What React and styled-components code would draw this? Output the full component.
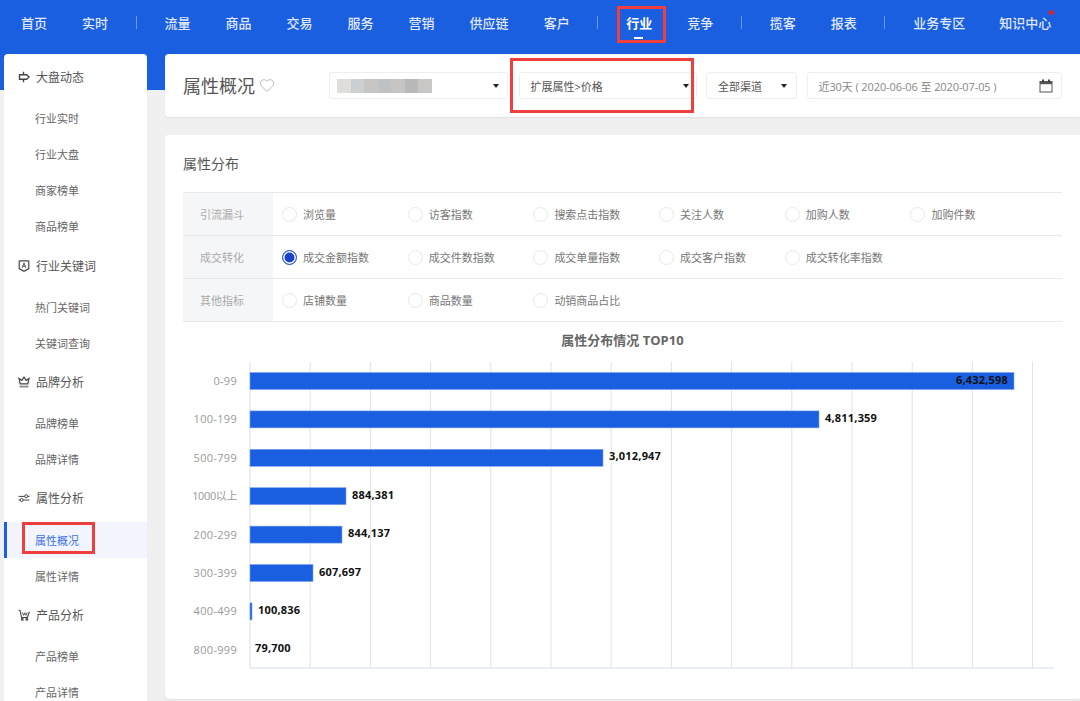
import React from 'react'
import styled, { createGlobalStyle } from 'styled-components'
import { Heart } from 'lucide-react'

const GlobalStyle = createGlobalStyle`
  html, body {
    margin: 0;
    padding: 0;
  }
  body {
    font-family: "Open Sans", "Noto Sans CJK SC", sans-serif;
    color: #555;
  }
  *, *::before, *::after {
    box-sizing: border-box;
  }
`

const RED = '#ee3e3e'
const BLUE = '#195fe0'

const Page = styled.div`
  width: 1080px;
  height: 701px;
  overflow: hidden;
  display: flex;
  flex-direction: column;
  background: linear-gradient(${BLUE} 90px, #f0f0f0 90px);
`

const TopBar = styled.nav`
  height: 54px;
  flex: none;
  display: flex;
  align-items: center;
  padding: 0 0 8.5px 3.5px;
`

const NavItem = styled.a`
  position: relative;
  padding: 0 17.5px;
  font-size: 13px;
  line-height: 20px;
  white-space: nowrap;
  color: ${p => (p.$active ? '#fff' : '#e0e8fa')};
  font-weight: ${p => (p.$active ? 700 : 500)};

  ${p => p.$active && `
    &::before {
      content: '';
      position: absolute;
      left: 8.5px;
      right: 3.5px;
      top: -7px;
      height: 37px;
      border: 3px solid ${RED};
    }
    &::after {
      content: '';
      position: absolute;
      left: 25px;
      bottom: -6.5px;
      width: 9px;
      height: 2px;
      background: #fff;
    }
  `}

  ${p => p.$dot && `
    margin-left: -1px;
    &::after {
      content: '';
      position: absolute;
      right: 14.5px;
      top: -3px;
      width: 5px;
      height: 5px;
      border-radius: 50%;
      background: #d8232a;
    }
  `}
`

const NavDivider = styled.span`
  width: 1px;
  height: 13px;
  margin: 0 10.5px 0 10px;
  background: #6b97ec;
`

const Body = styled.div`
  flex: 1;
  min-height: 0;
  display: flex;
  gap: 18px;
  padding-left: 4px;
`

const Sidebar = styled.aside`
  width: 143px;
  flex: none;
  padding-top: 2px;
  background: #fff;
  border-radius: 4px 4px 0 0;
`

const GroupHead = styled.div`
  height: 44.4px;
  display: flex;
  align-items: center;
  gap: 6px;
  padding: 0 0 2px 14px;
  font-size: 12px;
  color: #555;

  svg {
    width: 12px;
    height: 12px;
    flex: none;
    color: #444;
  }
`

const SideItem = styled.a`
  position: relative;
  height: 36px;
  display: flex;
  align-items: center;
  padding-left: 31px;
  font-size: 11px;
  color: ${p => (p.$active ? '#3f6fe6' : '#666')};
  background: ${p => (p.$active ? '#f2f5fd' : 'transparent')};

  ${p => p.$active && `
    &::before {
      content: '';
      position: absolute;
      left: 0;
      top: 0;
      bottom: 0;
      width: 3px;
      background: ${BLUE};
    }
    &::after {
      content: '';
      position: absolute;
      left: 18px;
      top: 0;
      width: 73px;
      height: 32px;
      border: 3px solid ${RED};
    }
  `}
`

const Main = styled.main`
  flex: 1;
  min-width: 0;
  display: flex;
  flex-direction: column;
  gap: 18px;
  padding-bottom: 2px;
`

const Card = styled.section`
  background: #fff;
  border-radius: 4px 0 0 4px;
  box-shadow: 0 1px 2px rgba(0, 0, 0, 0.07);
`

const FilterCard = styled(Card)`
  height: 63px;
  flex: none;
  display: flex;
  align-items: center;
  justify-content: space-between;
  padding: 0 18px;
`

const TitleRow = styled.div`
  display: flex;
  align-items: center;
  gap: 4px;
  padding-bottom: 2px;
  font-size: 18px;
  color: #555;

  svg {
    width: 16px;
    height: 16px;
    color: #bbb;
  }
`

const Filters = styled.div`
  display: flex;
  align-items: center;
  gap: 9.5px;

  > :first-child {
    margin-right: 1px;
  }
`

const Select = styled.div`
  position: relative;
  width: ${p => p.$width}px;
  height: 27px;
  display: flex;
  align-items: center;
  justify-content: space-between;
  padding: 0 ${p => p.$caretGap ?? 8}px 0 11px;
  border: 1px solid #eee;
  border-radius: 3px;
  font-size: 11px;
  color: #555;

  ${p => p.$marked && `
    &::after {
      content: '';
      position: absolute;
      left: -10px;
      right: 2px;
      top: -15px;
      bottom: -15px;
      border: 3px solid ${RED};
    }
  `}
`

const Caret = styled.span`
  width: 0;
  height: 0;
  border-left: 3.5px solid transparent;
  border-right: 3.5px solid transparent;
  border-top: 4px solid #222;
`

const Mosaic = styled.div`
  display: flex;
  height: 14px;
  margin-left: -4px;
`

const MosaicCell = styled.span`
  width: 13.5px;
  background: ${p => p.$color};
`

const DateBox = styled(Select)`
  color: #888;
  letter-spacing: -0.1px;

  svg {
    width: 14px;
    height: 14px;
    color: #555;
  }
`

const ChartCard = styled(Card)`
  flex: 1;
  padding: 0 18px;
`

const SectionTitle = styled.h2`
  height: 57px;
  margin: 0;
  padding-bottom: 2px;
  display: flex;
  align-items: center;
  font-size: 14px;
  font-weight: 400;
  color: #555;
`

const MetricTable = styled.div`
  border-top: 1px solid #e8e8e8;
`

const MetricRow = styled.div`
  height: 43px;
  display: flex;
  border-bottom: 1px solid #e8e8e8;
`

const MetricLabel = styled.div`
  width: 89.5px;
  flex: none;
  display: flex;
  align-items: center;
  padding-left: 17px;
  background: #f5f6f8;
  font-size: 11px;
  color: #aaa;
`

const MetricOptions = styled.div`
  flex: 1;
  display: grid;
  grid-template-columns: repeat(6, 125.7px);
  padding-left: 9.5px;
`

const Option = styled.label`
  display: flex;
  align-items: center;
  gap: 6px;
  font-size: 11px;
  color: #777;
`

const Radio = styled.span`
  width: 15px;
  height: 15px;
  flex: none;
  border-radius: 50%;
  border: 1px solid ${p => (p.$checked ? '#2f5bd8' : '#e8e8e8')};
  background: ${p => (p.$checked ? '#1a44c8' : '#fff')};
  box-shadow: ${p => (p.$checked ? 'inset 0 0 0 1.5px #fff' : 'none')};
`

const ChartTitle = styled.h3`
  height: 34px;
  margin: 0;
  display: flex;
  align-items: center;
  justify-content: center;
  font-size: 13px;
  font-weight: 700;
  color: #666;
`

const ChartSvg = styled.svg`
  display: block;
  font-family: "Open Sans", "Noto Sans CJK SC", sans-serif;
  font-size: 11px;
`

const SignIcon = () => (
  <svg viewBox="0 0 12 12" fill="none" stroke="currentColor" strokeWidth="1.4">
    <path d="M1.5 3.7h7.2L11 6 8.7 8.3H1.5z" />
    <path d="M5.5 0.8v2.9M5.5 8.3v3" />
  </svg>
)

const ShieldIcon = () => (
  <svg viewBox="0 0 12 12" fill="none" stroke="currentColor" strokeWidth="1.2">
    <path d="M2 0.8h8q0.8 0 0.8 0.8v7L6 11.3 1.2 8.6v-7q0-0.8 0.8-0.8z" />
    <path d="M4.1 7.8 6 3l1.9 4.8M4.7 6.3h2.6" strokeWidth="0.9" />
  </svg>
)

const CrownIcon = () => (
  <svg viewBox="0 0 12 12" fill="none" stroke="currentColor" strokeWidth="1.2">
    <path d="M2.2 7.8 1 2.4l2.9 2L6 1.2l2.1 3.2 2.9-2-1.2 5.4z" />
    <path d="M1.6 10.6h8.8" strokeWidth="1.8" stroke="#888" />
  </svg>
)

const SliderIcon = () => (
  <svg viewBox="0 0 12 12" fill="none" stroke="currentColor" strokeWidth="1">
    <path d="M0.5 4.4h6.2M9.8 4.4h1.7M0.5 8h1.7M5.2 8h6.3" />
    <circle cx="8.2" cy="4.2" r="1.5" />
    <circle cx="3.7" cy="8" r="1.5" />
  </svg>
)

const CartIcon = () => (
  <svg viewBox="0 0 12 12" fill="none" stroke="currentColor" strokeWidth="1.1">
    <path d="M0.5 1.2h1.4L3.6 8.5h5.8l2-5.8" />
    <path d="M4.4 3.4 5.6 6.3 6.8 3.8 8 6.3 9.2 3.4" strokeWidth="0.9" />
    <circle cx="4.3" cy="10.4" r="0.9" />
    <circle cx="8.8" cy="10.4" r="0.9" />
  </svg>
)

const CalendarIcon = () => (
  <svg viewBox="0 0 14 14" fill="none">
    <rect x="1" y="2.5" width="12" height="10.5" stroke="#555" />
    <path d="M1 4h12" stroke="#555" strokeWidth="2.4" />
    <path d="M4 0.5v3M10 0.5v3" stroke="#444" strokeWidth="2" />
  </svg>
)

const sideGroups = [
  { title: '大盘动态', Icon: SignIcon, items: ['行业实时', '行业大盘', '商家榜单', '商品榜单'] },
  { title: '行业关键词', Icon: ShieldIcon, items: ['热门关键词', '关键词查询'] },
  { title: '品牌分析', Icon: CrownIcon, items: ['品牌榜单', '品牌详情'] },
  { title: '属性分析', Icon: SliderIcon, items: ['属性概况', '属性详情'] },
  { title: '产品分析', Icon: CartIcon, items: ['产品榜单', '产品详情'] }
]

const metricRows = [
  { label: '引流漏斗', options: ['浏览量', '访客指数', '搜索点击指数', '关注人数', '加购人数', '加购件数'] },
  { label: '成交转化', options: ['成交金额指数', '成交件数指数', '成交单量指数', '成交客户指数', '成交转化率指数'] },
  { label: '其他指标', options: ['店铺数量', '商品数量', '动销商品占比'] }
]

const chartRows = [
  { label: '0-99', value: '6,432,598', width: 764, inside: true },
  { label: '100-199', value: '4,811,359', width: 569 },
  { label: '500-799', value: '3,012,947', width: 353 },
  { label: '1000以上', value: '884,381', width: 96, labelSpacing: -0.4 },
  { label: '200-299', value: '844,137', width: 92 },
  { label: '300-399', value: '607,697', width: 63 },
  { label: '400-499', value: '100,836', width: 2 },
  { label: '800-999', value: '79,700', width: 0 }
]

const mosaicColors = ['#e0dedb', '#cdd0d2', '#c8c6c4', '#bfc1c3', '#c6c5c4', '#b8b9b8', '#c8c7c6']

const AXIS_X = 67
const ROW_STEP = 38.4
const FIRST_BAR_Y = 16.5
const BAR_HEIGHT = 17
const gridLines = Array.from({ length: 14 }, (_, i) => AXIS_X + i * 60.2)

const valueX = row => {
  if (row.inside) return AXIS_X + row.width - 6
  return AXIS_X + row.width + (row.width ? 6 : 5)
}

const BarChart = () => (
  <ChartSvg width="879" height="324" viewBox="0 0 879 324">
    {gridLines.map((x, i) => (
      <line key={x} x1={x} x2={x} y1="6" y2="312" stroke={i === 0 ? '#d5deec' : '#e2e2e2'} />
    ))}
    <line x1={AXIS_X} x2="871" y1="312" y2="312" stroke="#d5deec" />
    {chartRows.map((row, i) => {
      const y = FIRST_BAR_Y + i * ROW_STEP
      return (
        <g key={row.label}>
          <text x="54" y={y + 12.5} textAnchor="end" fill="#999" letterSpacing={row.labelSpacing ?? 0.3}>{row.label}</text>
          {row.width > 0 && (
            <rect x={AXIS_X} y={y} width={row.width} height={BAR_HEIGHT} fill={BLUE} stroke="#7fa3ee" strokeWidth="0.6" />
          )}
          <text
            x={valueX(row)}
            y={y + 11}
            textAnchor={row.inside ? 'end' : 'start'}
            fill="#111"
            fontWeight="700"
            letterSpacing="0.2"
          >
            {row.value}
          </text>
        </g>
      )
    })}
  </ChartSvg>
)

const App = () => {
  return (
    <Page>
      <GlobalStyle />
      <TopBar>
        <NavItem>首页</NavItem>
        <NavItem>实时</NavItem>
        <NavDivider />
        <NavItem>流量</NavItem>
        <NavItem>商品</NavItem>
        <NavItem>交易</NavItem>
        <NavItem>服务</NavItem>
        <NavItem>营销</NavItem>
        <NavItem>供应链</NavItem>
        <NavItem>客户</NavItem>
        <NavDivider />
        <NavItem $active>行业</NavItem>
        <NavItem>竞争</NavItem>
        <NavDivider />
        <NavItem>揽客</NavItem>
        <NavItem>报表</NavItem>
        <NavDivider />
        <NavItem>业务专区</NavItem>
        <NavItem $dot>知识中心</NavItem>
      </TopBar>

      <Body>
        <Sidebar>
          {sideGroups.map(({ title, Icon, items }) => (
            <div key={title}>
              <GroupHead><Icon />{title}</GroupHead>
              {items.map(item => (
                <SideItem key={item} $active={item === '属性概况'}>{item}</SideItem>
              ))}
            </div>
          ))}
        </Sidebar>

        <Main>
          <FilterCard>
            <TitleRow>属性概况<Heart strokeWidth={1.5} /></TitleRow>
            <Filters>
              <Select $width={179} $caretGap={8.5}>
                <Mosaic>
                  {mosaicColors.map((color, i) => <MosaicCell key={i} $color={color} />)}
                </Mosaic>
                <Caret />
              </Select>
              <Select $width={178} $caretGap={6.5} $marked>扩展属性&gt;价格<Caret /></Select>
              <Select $width={91} $caretGap={9.5}>全部渠道<Caret /></Select>
              <DateBox $width={255.5}>近30天 ( 2020-06-06 至 2020-07-05 )<CalendarIcon /></DateBox>
            </Filters>
          </FilterCard>

          <ChartCard>
            <SectionTitle>属性分布</SectionTitle>
            <MetricTable>
              {metricRows.map(row => (
                <MetricRow key={row.label}>
                  <MetricLabel>{row.label}</MetricLabel>
                  <MetricOptions>
                    {row.options.map(option => (
                      <Option key={option}>
                        <Radio $checked={option === '成交金额指数'} />
                        {option}
                      </Option>
                    ))}
                  </MetricOptions>
                </MetricRow>
              ))}
            </MetricTable>
            <ChartTitle>属性分布情况 TOP10</ChartTitle>
            <BarChart />
          </ChartCard>
        </Main>
      </Body>
    </Page>
  )
}

export default App
